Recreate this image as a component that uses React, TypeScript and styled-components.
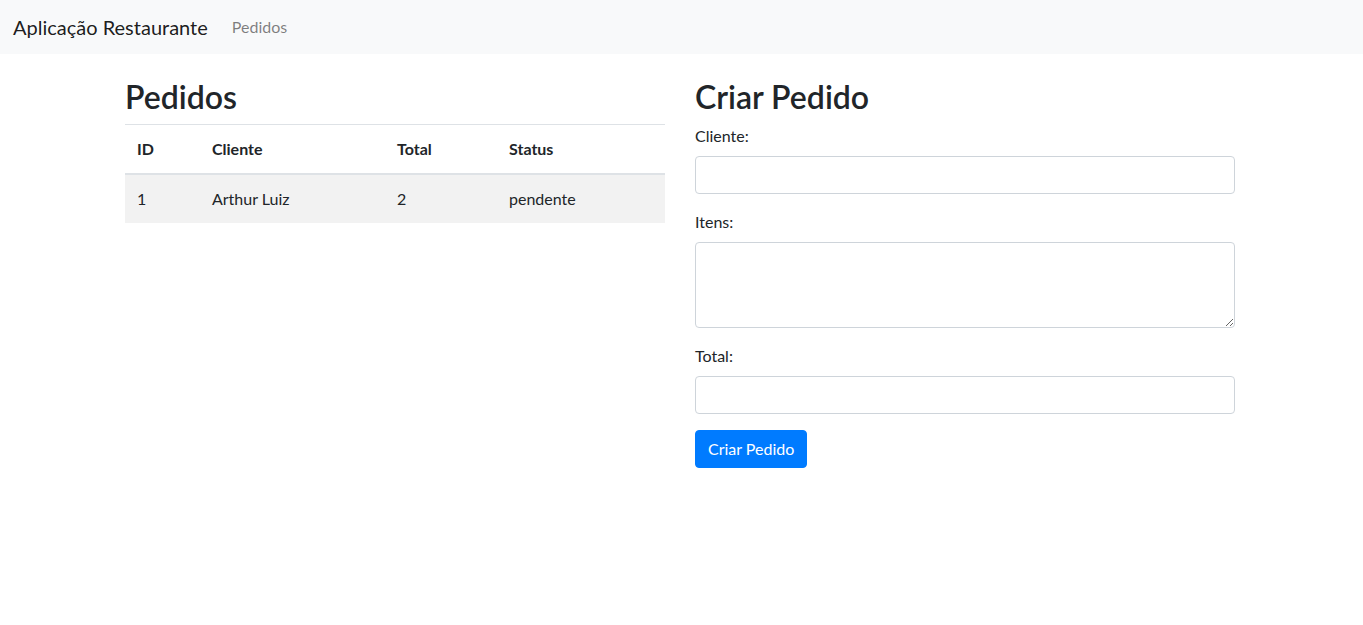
import React from "react";
import styled, { createGlobalStyle } from "styled-components";

const GlobalStyle = createGlobalStyle`
  *, *::before, *::after { box-sizing: border-box; }
  html, body { margin: 0; padding: 0; background: #fff; }
  body {
    font-family: "Segoe UI", Lato, "Noto Sans", sans-serif;
    font-size: 16px;
    line-height: 1.5;
    color: #212529;
  }
`;

const Navbar = styled.nav`
  display: flex;
  align-items: center;
  height: 54px;
  padding: 8px 13px;
  background: #f8f9fa;
`;

const Brand = styled.a`
  font-size: 20px;
  line-height: 30px;
  color: rgba(0, 0, 0, 0.9);
  text-decoration: none;
  margin-right: 24px;
`;

const NavLink = styled.a`
  font-size: 16px;
  color: rgba(0, 0, 0, 0.5);
  text-decoration: none;
`;

const Container = styled.main`
  width: 1140px;
  margin: 24px 0 0 calc(50% - 571.5px);
  display: grid;
  grid-template-columns: 1fr 1fr;
`;

const Column = styled.section`
  padding: 0 15px;
`;

const Heading = styled.h2`
  margin: 0 0 8px;
  font-size: 32px;
  font-weight: 600;
  line-height: 1.2;
`;

const Table = styled.table`
  width: 100%;
  border-collapse: collapse;
`;

const Th = styled.th<{ $w: number }>`
  width: ${(p) => p.$w}px;
  text-align: left;
  font-weight: 700;
  padding: 12px;
  border-top: 1px solid #dee2e6;
  border-bottom: 2px solid #dee2e6;
`;

const Tr = styled.tr<{ $striped?: boolean }>`
  background: ${(p) => (p.$striped ? "rgba(0,0,0,0.05)" : "transparent")};
`;

const Td = styled.td`
  padding: 12px;
  border-top: 1px solid #dee2e6;
`;

const FormGroup = styled.div`
  margin-bottom: 16px;
`;

const Label = styled.label`
  display: block;
  margin-bottom: 8px;
`;

const Input = styled.input`
  display: block;
  width: 100%;
  height: 38px;
  padding: 6px 12px;
  font: inherit;
  color: #495057;
  background: #fff;
  border: 1px solid #ced4da;
  border-radius: 4px;
  outline: none;
`;

const TextArea = styled.textarea`
  display: block;
  width: 100%;
  height: 86px;
  padding: 6px 12px;
  font: inherit;
  color: #495057;
  background: #fff;
  border: 1px solid #ced4da;
  border-radius: 4px;
  outline: none;
`;

const Button = styled.button`
  display: inline-block;
  height: 38px;
  padding: 6px 12px;
  font: inherit;
  color: #fff;
  background: #007bff;
  border: 1px solid #007bff;
  border-radius: 4px;
  cursor: pointer;
`;

export default function App() {
  return (
    <>
      <GlobalStyle />
      <Navbar>
        <Brand href="#">Aplicação Restaurante</Brand>
        <NavLink href="#">Pedidos</NavLink>
      </Navbar>
      <Container>
        <Column>
          <Heading>Pedidos</Heading>
          <Table>
            <thead>
              <tr>
                <Th $w={75}>ID</Th>
                <Th $w={185}>Cliente</Th>
                <Th $w={112}>Total</Th>
                <Th $w={168}>Status</Th>
              </tr>
            </thead>
            <tbody>
              <Tr $striped>
                <Td>1</Td>
                <Td>Arthur Luiz</Td>
                <Td>2</Td>
                <Td>pendente</Td>
              </Tr>
            </tbody>
          </Table>
        </Column>
        <Column>
          <Heading>Criar Pedido</Heading>
          <form onSubmit={(e) => e.preventDefault()}>
            <FormGroup>
              <Label htmlFor="cliente">Cliente:</Label>
              <Input id="cliente" type="text" />
            </FormGroup>
            <FormGroup>
              <Label htmlFor="itens">Itens:</Label>
              <TextArea id="itens" rows={3} />
            </FormGroup>
            <FormGroup>
              <Label htmlFor="total">Total:</Label>
              <Input id="total" type="number" />
            </FormGroup>
            <Button type="submit">Criar Pedido</Button>
          </form>
        </Column>
      </Container>
    </>
  );
}
